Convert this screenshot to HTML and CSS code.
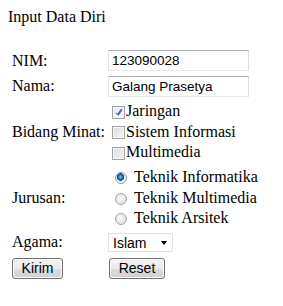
FILE: index.html
```html
<html>
  <head>
    <meta charset="utf-8">
    <title>Input Data Diri</title>
    <link rel="stylesheet" href="styles.css">
  </head>
  <body>
    <div class="judul">Input Data Diri</div>
    <form class="form">
      <div class="baris">
        <label class="label">NIM:</label>
        <input class="teks" type="text" value="123090028">
      </div>
      <div class="baris">
        <label class="label">Nama:</label>
        <input class="teks" type="text" value="Galang Prasetya">
      </div>
      <div class="baris">
        <label class="label">Bidang Minat:</label>
        <div class="pilihan">
          <label class="opsi"><input class="cek" type="checkbox" checked>Jaringan</label>
          <label class="opsi"><input class="cek" type="checkbox">Sistem Informasi</label>
          <label class="opsi"><input class="cek" type="checkbox">Multimedia</label>
        </div>
      </div>
      <div class="baris">
        <label class="label">Jurusan:</label>
        <div class="pilihan">
          <label class="opsi"><input class="radio" type="radio" name="jurusan" checked>Teknik Informatika</label>
          <label class="opsi"><input class="radio" type="radio" name="jurusan">Teknik Multimedia</label>
          <label class="opsi"><input class="radio" type="radio" name="jurusan">Teknik Arsitek</label>
        </div>
      </div>
      <div class="baris">
        <label class="label label-agama">Agama:</label>
        <span class="pilih-wrap">
          <select class="pilih">
            <option>Islam</option>
            <option>Kristen</option>
            <option>Katolik</option>
            <option>Hindu</option>
            <option>Buddha</option>
          </select>
        </span>
      </div>
      <div class="baris baris-tombol">
        <div><button class="tombol tombol-kirim" type="submit">Kirim</button></div>
        <div><button class="tombol tombol-reset" type="reset">Reset</button></div>
      </div>
    </form>
  </body>
</html>
```

FILE: styles.css
```css
body {
  margin: 8px;
  font-family: "Liberation Serif", "Times New Roman", serif;
  font-size: 16px;
  color: #000;
  background: #fff;
}

.judul {
  line-height: 18px;
}

.form {
  display: flex;
  flex-direction: column;
  gap: 4.5px;
  margin: 24px 0 0;
  padding-left: 4px;
}

.baris {
  display: grid;
  grid-template-columns: 96px auto;
  align-items: center;
}

.label {
  line-height: 18px;
}

.label-agama {
  position: relative;
  top: -1px;
}

.teks {
  box-sizing: border-box;
  width: 141px;
  height: 21px;
  margin: 0;
  padding: 0 3px;
  border: 1px solid;
  border-color: #abadb3 #dbdfe6 #e3e9ef #e2e3ea;
  font-family: "Liberation Sans", Arial, sans-serif;
  font-size: 13.5px;
  color: #000;
  outline: none;
}

.pilihan {
  display: flex;
  flex-direction: column;
}

.opsi {
  display: flex;
  align-items: center;
  height: 20.5px;
}

.cek {
  position: relative;
  -webkit-appearance: none;
  appearance: none;
  box-sizing: border-box;
  width: 13px;
  height: 13px;
  margin: 2px 1px 0 4px;
  border: 1px solid #a3a3a3;
  background: linear-gradient(135deg, #dcdcdc, #f6f6f6);
  box-shadow: inset 0 0 0 1px #f6f6f6;
}

.cek:checked {
  background: linear-gradient(135deg, #e4eaf5, #fafbfd);
}

.cek:checked::after {
  content: "";
  position: absolute;
  left: 4px;
  top: 1px;
  width: 2px;
  height: 6px;
  border-right: 2px solid #4a66a8;
  border-bottom: 1.5px solid #4a66a8;
  transform: rotate(35deg);
}

.radio {
  -webkit-appearance: none;
  appearance: none;
  box-sizing: border-box;
  width: 12px;
  height: 12px;
  margin: 2px 7px 0 7px;
  border: 1px solid #a4a4a4;
  border-radius: 50%;
  background: radial-gradient(circle at 40% 40%, #fafafa, #d6d6d6);
}

.radio:checked {
  border-color: #8a9bb0;
  background: radial-gradient(circle at 45% 40%, #7fc3ef 0, #2e79b5 2px, #0f3f6a 3.5px, #e6eef5 4px, #ffffff 6px);
}

.pilih-wrap {
  position: relative;
  display: inline-block;
  width: 65px;
}

.pilih-wrap::after {
  content: "";
  position: absolute;
  right: 6px;
  top: 8px;
  border-left: 3.5px solid transparent;
  border-right: 3.5px solid transparent;
  border-top: 4px solid #000;
  pointer-events: none;
}

.pilih {
  -webkit-appearance: none;
  appearance: none;
  box-sizing: border-box;
  width: 65px;
  height: 19px;
  margin: 0;
  padding: 0 0 0 4px;
  border: 1px solid #e2e3ea;
  border-radius: 0;
  background: #fff;
  font-family: "Liberation Sans", Arial, sans-serif;
  font-size: 14px;
  color: #000;
  outline: none;
}

.baris-tombol {
  margin-top: 1px;
}

.tombol {
  box-sizing: border-box;
  height: 21px;
  margin: 0;
  padding: 0;
  border: 1px solid #707070;
  border-radius: 3px;
  background: linear-gradient(#f2f2f2 0, #ebebeb 50%, #dddddd 51%, #cfcfcf 100%);
  box-shadow: inset 0 0 0 1px #fcfcfc;
  font-family: "Liberation Sans", Arial, sans-serif;
  font-size: 14px;
  color: #000;
}

.tombol-kirim {
  width: 51px;
}

.tombol-reset {
  width: 56px;
  margin-left: 1px;
}
```
